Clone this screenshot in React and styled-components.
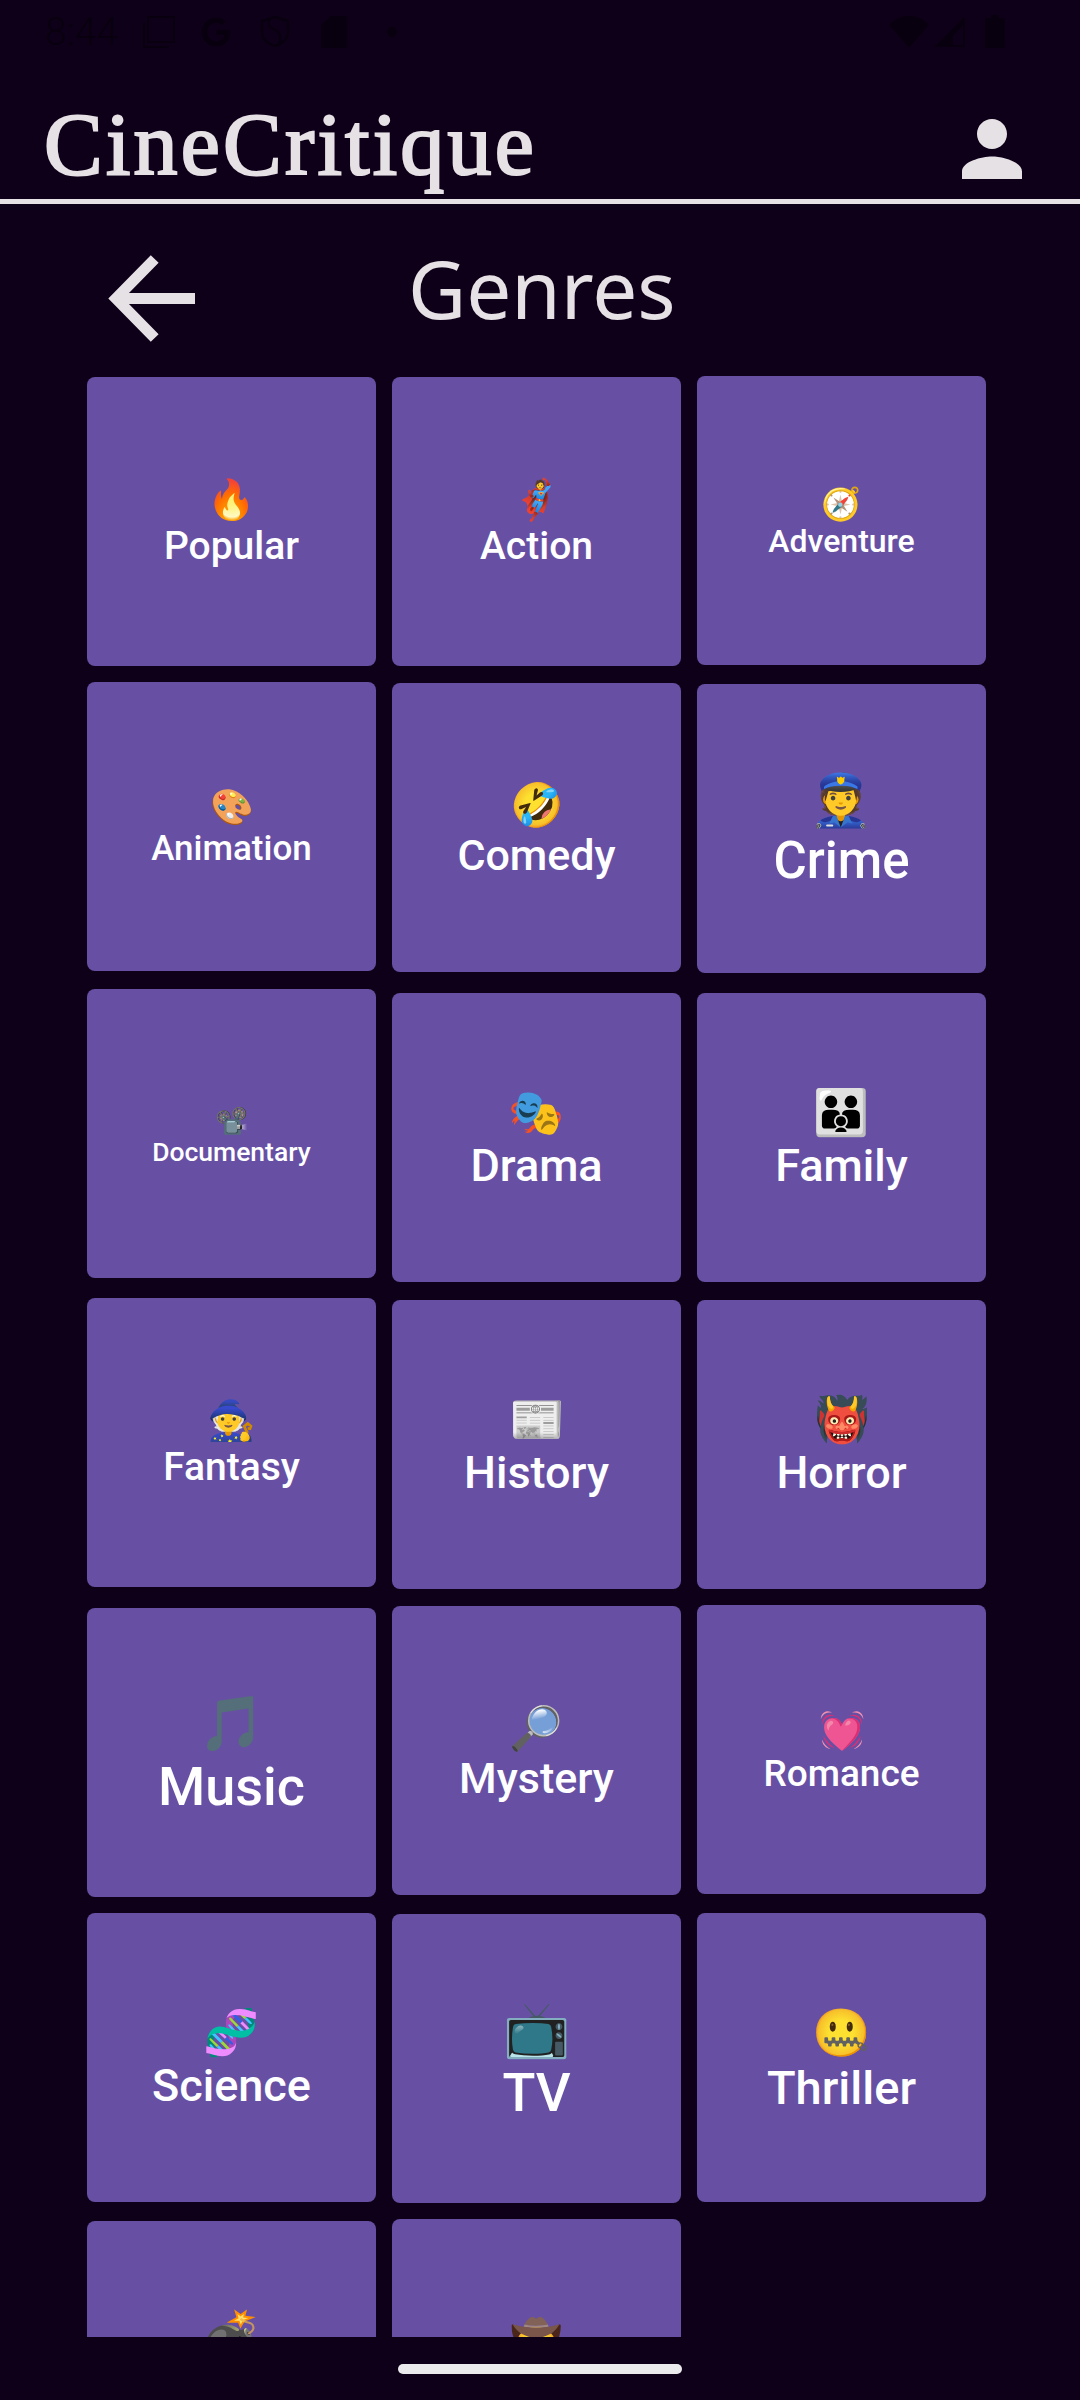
import React from 'react';
import styled, { createGlobalStyle } from 'styled-components';
import { FaGoogle } from 'react-icons/fa';

const Global = createGlobalStyle`
  html, body { margin: 0; padding: 0; background: #0f001a; }
`

const Page = styled.div`
  width: 1080px;
  height: 2400px;
  display: flex;
  flex-direction: column;
  background: #0f001a;
  overflow: hidden;
  font-family: Roboto, sans-serif;
`

const StatusBar = styled.div`
  height: 63px;
  flex: none;
  display: flex;
  align-items: center;
  justify-content: space-between;
  padding: 0 75px 0 45px;
  color: #08000e;
`
const StatusGroup = styled.div`
  display: flex;
  align-items: center;
  gap: ${p => p.$gap}px;
`
const Clock = styled.span`
  font-size: 39px;
  font-weight: 300;
  line-height: 46px;
  width: 83px;
`

const Header = styled.header`
  height: 136px;
  flex: none;
  display: flex;
  align-items: flex-start;
  justify-content: space-between;
  padding: 0 43px 0 44px;
  border-bottom: 5px solid #e6e1e5;
`
const Brand = styled.h1`
  margin: 32px 0 0;
  font-family: "Liberation Serif", serif;
  font-size: 88px;
  font-weight: 400;
  line-height: 100px;
  letter-spacing: 3.2px;
  -webkit-text-stroke: 2.2px #e6e1e5;
  color: #e6e1e5;
`
const ProfileIcon = styled.svg`
  width: 90px;
  height: 90px;
  margin-top: 41px;
  fill: #e6e1e5;
`

const TitleRow = styled.div`
  height: 172px;
  flex: none;
  box-sizing: border-box;
  display: flex;
  align-items: flex-start;
  padding: 46px 0 0 100px;
`
const BackIcon = styled.svg`
  width: 100px;
  height: 100px;
  fill: none;
  stroke: #e6e1e5;
  stroke-width: 11;
`
const PageTitle = styled.h2`
  margin: -12px 0 0 208px;
  font-family: "Noto Sans", sans-serif;
  font-size: 80px;
  font-weight: 400;
  line-height: 100px;
  color: #e6e1e5;
`

const Scroller = styled.div`
  height: 1961px;
  flex: none;
  overflow: hidden;
  display: flex;
  gap: 16px;
  padding-left: 87px;
`
const Column = styled.div`
  width: 289px;
  display: flex;
  flex-direction: column;
`
const Card = styled.div`
  flex: none;
  height: 289px;
  box-sizing: border-box;
  margin-top: ${p => p.$top}px;
  padding-top: 5px;
  border-radius: 8px;
  background: #6750a4;
  display: flex;
  align-items: center;
  justify-content: center;
`
const Label = styled.span`
  font-size: ${p => p.$size}px;
  font-weight: 500;
  line-height: 1.17;
  color: #fff;
  text-align: center;
  white-space: pre-line;
`

const NavArea = styled.div`
  flex: 1;
  display: flex;
  justify-content: center;
  padding-top: 27px;
`
const NavPill = styled.div`
  width: 284px;
  height: 10px;
  border-radius: 5px;
  background: #ebebed;
`

const columns = [
  [
    { emoji: '🔥', name: 'Popular', size: 39, top: 1 },
    { emoji: '🎨', name: 'Animation', size: 35, top: 16 },
    { emoji: '📽️', name: 'Documentary', size: 26.5, top: 18 },
    { emoji: '🧙', name: 'Fantasy', size: 39, top: 20 },
    { emoji: '🎵', name: 'Music', size: 54, top: 21 },
    { emoji: '🧬', name: 'Science', size: 45, top: 16 },
    { emoji: '💣', name: 'War', size: 51, top: 19 },
  ],
  [
    { emoji: '🦸', name: 'Action', size: 39, top: 1 },
    { emoji: '🤣', name: 'Comedy', size: 43, top: 17 },
    { emoji: '🎭', name: 'Drama', size: 45, top: 21 },
    { emoji: '📰', name: 'History', size: 45, top: 18 },
    { emoji: '🔎', name: 'Mystery', size: 43, top: 17 },
    { emoji: '📺', name: 'TV', size: 54, top: 19 },
    { emoji: '🤠', name: 'Western', size: 42, top: 16 },
  ],
  [
    { emoji: '🧭', name: 'Adventure', size: 32, top: 0 },
    { emoji: '👮', name: 'Crime', size: 51, top: 19 },
    { emoji: '👪', name: 'Family', size: 45, top: 20 },
    { emoji: '👹', name: 'Horror', size: 45, top: 18 },
    { emoji: '💓', name: 'Romance', size: 37, top: 16 },
    { emoji: '🤐', name: 'Thriller', size: 47, top: 19 },
  ],
];

const App = () => {
  return (
    <Page>
      <Global />
      <StatusBar>
        <StatusGroup $gap={15}>
          <Clock>8:44</Clock>
          <svg width="32" height="32" viewBox="0 0 32 32" fill="none" stroke="currentColor" strokeWidth="2">
            <rect x="5" y="1" width="26" height="25" />
            <path d="M1 7v24h25" />
          </svg>
          <FaGoogle size={30} style={{ marginLeft: 11 }} />
          <svg width="30" height="33" viewBox="0 0 30 33" fill="none" stroke="currentColor" strokeWidth="2.4" style={{ marginLeft: 14 }}>
            <path d="M15 2 28 6v11c0 7-6 12-13 14C8 29 2 24 2 17V6z" />
            <path d="M10 4c-3 6 0 9 5 11s7 6 4 14" />
          </svg>
          <svg width="26" height="32" viewBox="0 0 26 32" fill="currentColor" style={{ marginLeft: 16 }}>
            <path d="M10 0h14a2 2 0 0 1 2 2v28a2 2 0 0 1-2 2H2a2 2 0 0 1-2-2V9z" />
          </svg>
          <svg width="10" height="10" viewBox="0 0 10 10" fill="currentColor" style={{ marginLeft: 25 }}>
            <circle cx="5" cy="5" r="5" />
          </svg>
        </StatusGroup>
        <StatusGroup $gap={5}>
          <svg width="40" height="32" viewBox="0 0 40 32" fill="currentColor">
            <path d="M0 9C5 3 12 0 20 0s15 3 20 9L20 32z" />
          </svg>
          <svg width="32" height="32" viewBox="0 0 32 32" fill="currentColor" style={{ marginRight: 14 }}>
            <path fillRule="evenodd" d="M31 0v31H0zM29 9 19 20v9h10z" />
          </svg>
          <svg width="20" height="33" viewBox="0 0 20 33" fill="currentColor">
            <path d="M6 0h8v3h5a1 1 0 0 1 1 1v28a1 1 0 0 1-1 1H1a1 1 0 0 1-1-1V4a1 1 0 0 1 1-1h5z" />
          </svg>
        </StatusGroup>
      </StatusBar>

      <Header>
        <Brand>CineCritique</Brand>
        <ProfileIcon viewBox="0 0 24 24">
          <path d="M12 12c2.21 0 4-1.79 4-4s-1.79-4-4-4-4 1.79-4 4 1.79 4 4 4zm0 2c-2.67 0-8 1.34-8 4v2h16v-2c0-2.66-5.33-4-8-4z" />
        </ProfileIcon>
      </Header>

      <TitleRow>
        <BackIcon viewBox="0 0 100 100">
          <path d="M54.7 9 16 48.5 54.7 88M16 48.5h79" />
        </BackIcon>
        <PageTitle>Genres</PageTitle>
      </TitleRow>

      <Scroller>
        {columns.map((cards, i) => (
          <Column key={i}>
            {cards.map((card) => (
              <Card key={card.name} $top={card.top}>
                <Label $size={card.size}>{`${card.emoji}\n${card.name}`}</Label>
              </Card>
            ))}
          </Column>
        ))}
      </Scroller>

      <NavArea>
        <NavPill />
      </NavArea>
    </Page>
  )
}

export default App
